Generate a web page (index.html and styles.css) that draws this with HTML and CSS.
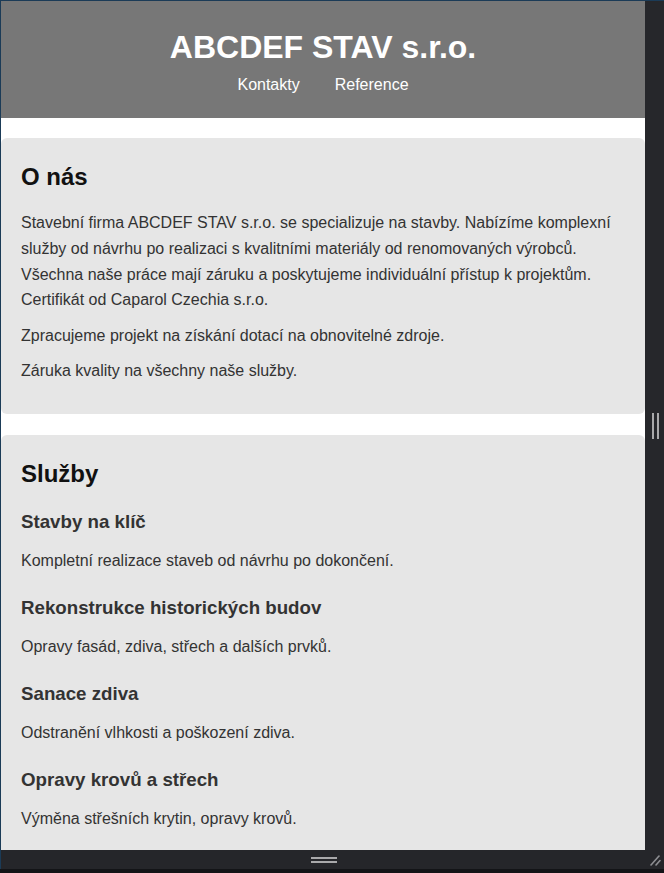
FILE: index.html
```html
<!DOCTYPE html>
<html lang="cs">
<head>
<meta charset="utf-8">
<title>ABCDEF STAV s.r.o.</title>
<link rel="stylesheet" href="styles.css">
</head>
<body>
<div class="shell">
  <div class="viewport">
    <header class="site-header">
      <h1 class="site-title">ABCDEF STAV s.r.o.</h1>
      <nav class="site-nav">
        <a href="#kontakty">Kontakty</a>
        <a href="#reference">Reference</a>
      </nav>
    </header>
    <main class="content">
      <section class="card">
        <h2>O nás</h2>
        <p>Stavební firma ABCDEF STAV s.r.o. se specializuje na stavby. Nabízíme komplexní služby od návrhu po realizaci s kvalitními materiály od renomovaných výrobců. Všechna naše práce mají záruku a poskytujeme individuální přístup k projektům. Certifikát od Caparol Czechia s.r.o.</p>
        <p>Zpracujeme projekt na získání dotací na obnovitelné zdroje.</p>
        <p>Záruka kvality na všechny naše služby.</p>
      </section>
      <section class="card">
        <h2>Služby</h2>
        <div class="service">
          <h3>Stavby na klíč</h3>
          <p>Kompletní realizace staveb od návrhu po dokončení.</p>
        </div>
        <div class="service">
          <h3>Rekonstrukce historických budov</h3>
          <p>Opravy fasád, zdiva, střech a dalších prvků.</p>
        </div>
        <div class="service">
          <h3>Sanace zdiva</h3>
          <p>Odstranění vlhkosti a poškození zdiva.</p>
        </div>
        <div class="service">
          <h3>Opravy krovů a střech</h3>
          <p>Výměna střešních krytin, opravy krovů.</p>
        </div>
      </section>
    </main>
  </div>
  <div class="side-panel">
    <span class="grip-v"></span>
  </div>
  <div class="bottom-bar">
    <span class="grip-h"></span>
  </div>
  <div class="corner">
    <svg width="19" height="19" viewBox="0 0 19 19" aria-hidden="true">
      <path d="M6 15 L14 6" stroke="#8e8f93" stroke-width="1.6" stroke-linecap="round"/>
      <path d="M11 15 L15 10.5" stroke="#8e8f93" stroke-width="1.6" stroke-linecap="round"/>
    </svg>
  </div>
  <div class="bottom-strip"></div>
</div>
</body>
</html>
```

FILE: styles.css
```css
* { box-sizing: border-box; }

html, body {
  margin: 0;
  padding: 0;
  background: #131417;
}

.shell {
  width: 664px;
  height: 873px;
  display: grid;
  grid-template-rows: 849px 19px 4px;
  grid-template-columns: 644px 19px;
  grid-template-areas:
    "view side"
    "bar corner"
    "strip strip";
  background: #26272b;
  border-top: 1px solid #1b3b57;
  border-left: 1px solid #1b3b57;
}

.viewport {
  grid-area: view;
  overflow: hidden;
  background: #ffffff;
  font-family: "Liberation Sans", Arial, sans-serif;
  font-size: 16px;
  color: #333333;
  line-height: 1.6;
}

.side-panel {
  grid-area: side;
  background: #26272b;
  display: flex;
  align-items: center;
  justify-content: center;
}

.grip-v {
  width: 7px;
  height: 26px;
  border-left: 2px solid #a9a9ab;
  border-right: 2px solid #a9a9ab;
  margin-left: 1px;
}

.bottom-bar {
  grid-area: bar;
  background: #25262a;
  display: flex;
  justify-content: center;
  align-items: center;
}

.grip-h {
  width: 26px;
  height: 6px;
  border-top: 2px solid #a9a9ab;
  border-bottom: 2px solid #a9a9ab;
  margin-left: 1px;
}

.corner {
  grid-area: corner;
  background: #25262a;
}

.corner svg { display: block; }

.bottom-strip {
  grid-area: strip;
  background: #131417;
  margin-left: -1px;
}

/* page */

.site-header {
  background: #777777;
  color: #ffffff;
  text-align: center;
  padding: 28px 0 24px;
}

.site-title {
  margin: 0 0 10px;
  font-size: 32px;
  line-height: 37px;
  font-weight: bold;
}

.site-nav {
  display: flex;
  justify-content: center;
  gap: 35px;
  line-height: 18px;
}

.site-nav a {
  color: #ffffff;
  text-decoration: none;
}

.content {
  padding-top: 20px;
  display: flex;
  flex-direction: column;
  gap: 21px;
}

.card {
  background: #e6e6e6;
  border-radius: 6px;
  padding: 20px;
}

.card h2 {
  margin: 0 0 14px;
  font-size: 24px;
  color: #111111;
}

.card p {
  margin: 0 0 10px;
}

.card h3 {
  margin: 0 0 11px;
  font-size: 18.72px;
  color: #333333;
}

.service { margin-top: 3px; }
.service + .service { margin-top: 19.5px; }
```
